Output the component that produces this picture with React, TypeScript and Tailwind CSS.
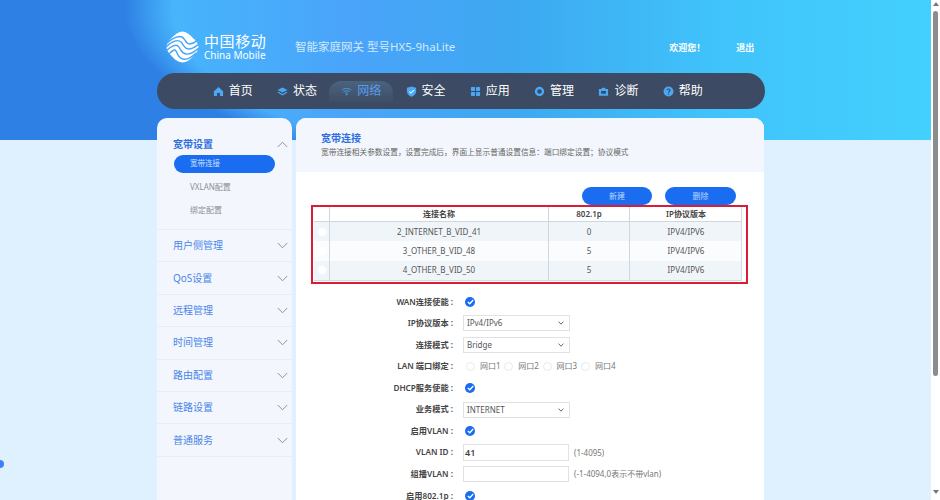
import React from "react";

const font = { fontFamily: '"Noto Sans", "Noto Sans CJK SC", sans-serif' };

const Logo = () => (
  <svg width="33" height="32" viewBox="0 0 33 32" className="shrink-0">
    <path
      d="M16.5 0.5 C20 0.5 23 3 26 6 C29 9 32.5 12.5 32.5 16 C32.5 19.5 29.5 23 26.5 26 C23.5 29 20 31.5 16.5 31.5 C13 31.5 9.5 29 6.5 26 C3.5 23 0.5 19.5 0.5 16 C0.5 12.5 3.5 9 6.5 6 C9.5 3 13 0.5 16.5 0.5 Z"
      fill="#fff"
    />
    <g fill="none" stroke="#49a6f8" strokeWidth="1.4">
      <path d="M1 12 C7 7 12 4 16 6 C20 8 19 13 24 13 C28 13 30 10 33 8" />
      <path d="M0 16 C6 10 12 8 15 11 C18 14 18 18 23 18 C27 18 30 15 33 13" />
      <path d="M0 20 C5 15 10 13 12 15 C15 18 15 22 20 23 C25 24 29 20 33 17" />
      <path d="M3 23 C7 19 9 18 10 20 C12 23 12 27 17 28 C21 29 25 27 30 22" />
    </g>
  </svg>
);

const cls = "w-[11px] h-[11px] shrink-0";
const navIcons: Record<string, React.ReactNode> = {
  home: (
    <svg viewBox="0 0 12 12" className={cls} fill="#4aa8f5">
      <path d="M6 1 L11 5.6 V11 H7.6 V7.6 H4.4 V11 H1 V5.6 Z" />
    </svg>
  ),
  layers: (
    <svg viewBox="0 0 12 12" className={cls} fill="#4aa8f5">
      <path d="M6 1.5 L11.5 4.4 L6 7.2 L0.5 4.4 Z" />
      <path d="M1.6 6.4 L6 8.6 L10.4 6.4 L11.5 7 L6 10.4 L0.5 7 Z" />
    </svg>
  ),
  wifi: (
    <svg viewBox="0 0 12 12" className={cls} fill="none" stroke="#4aa8f5" strokeWidth="0.9">
      <path d="M0.8 4.6 C3.6 2 8.4 2 11.2 4.6" />
      <path d="M2.6 6.4 C4.5 4.9 7.5 4.9 9.4 6.4" />
      <path d="M4.4 8 C5.4 7.4 6.6 7.4 7.6 8" />
      <circle cx="6" cy="9.4" r="0.5" fill="#4aa8f5" />
    </svg>
  ),
  shield: (
    <svg viewBox="0 0 12 12" className={cls}>
      <path d="M6 0.5 L11 2 V6 C11 9 8.6 10.8 6 11.8 C3.4 10.8 1 9 1 6 V2 Z" fill="#4aa8f5" />
      <path d="M3.6 6 L5.4 7.7 L8.6 4.4" fill="none" stroke="#fff" strokeWidth="1.1" />
    </svg>
  ),
  grid: (
    <svg viewBox="0 0 12 12" className={cls} fill="#4aa8f5">
      <rect x="1" y="1" width="4.5" height="4.5" rx="0.8" />
      <rect x="6.5" y="1" width="4.5" height="4.5" rx="0.8" />
      <rect x="1" y="6.5" width="4.5" height="4.5" rx="0.8" />
      <rect x="6.5" y="6.5" width="4.5" height="4.5" rx="0.8" />
    </svg>
  ),
  ring: (
    <svg viewBox="0 0 12 12" className={cls} fill="none" stroke="#4aa8f5" strokeWidth="2.6">
      <circle cx="6" cy="6" r="3.8" />
    </svg>
  ),
  kit: (
    <svg viewBox="0 0 12 12" className={cls}>
      <path d="M1 3.4 H3.6 L4.4 1.8 H7.6 L8.4 3.4 H11 V10.5 H1 Z" fill="#4aa8f5" />
      <rect x="3.4" y="5.4" width="5.2" height="3" fill="#3c4a63" />
    </svg>
  ),
  help: (
    <svg viewBox="0 0 12 12" className={cls}>
      <circle cx="6" cy="6" r="5.4" fill="#4aa8f5" />
      <path d="M4.3 4.7 C4.4 2.8 7.8 2.9 7.7 4.8 C7.6 6 6 6 6 7.3" fill="none" stroke="#3c4a63" strokeWidth="1.1" />
      <circle cx="6" cy="8.9" r="0.7" fill="#3c4a63" />
    </svg>
  ),
};

const navItems = [
  { icon: "home", label: "首页" },
  { icon: "layers", label: "状态" },
  { icon: "wifi", label: "网络", active: true },
  { icon: "shield", label: "安全" },
  { icon: "grid", label: "应用" },
  { icon: "ring", label: "管理" },
  { icon: "kit", label: "诊断" },
  { icon: "help", label: "帮助" },
];

const Chevron = ({ up }: { up?: boolean }) => (
  <svg width="11" height="7" viewBox="0 0 11 7" fill="none" stroke="#8d929b" strokeWidth="1">
    <path d={up ? "M0.8 6 L5.5 1.2 L10.2 6" : "M0.8 1 L5.5 5.8 L10.2 1"} />
  </svg>
);

const sideItems = ["用户侧管理", "QoS设置", "远程管理", "时间管理", "路由配置", "链路设置", "普通服务"];

const Check = () => (
  <span className="flex h-[10px] w-[10px] items-center justify-center rounded-full bg-[#1a6cf0]">
    <svg width="7" height="6" viewBox="0 0 7 6" fill="none" stroke="#fff" strokeWidth="1.3">
      <path d="M0.8 3 L2.8 4.8 L6.2 1" />
    </svg>
  </span>
);

const Select = ({ value }: { value: string }) => (
  <div className="flex h-[16px] w-[107px] items-center justify-between border border-[#dfe3e8] bg-white pl-[3px] pr-[5px] text-[8px] text-[#555]">
    <span>{value}</span>
    <svg width="6" height="4" viewBox="0 0 6 4" fill="none" stroke="#555" strokeWidth="0.9">
      <path d="M0.5 0.6 L3 3.2 L5.5 0.6" />
    </svg>
  </div>
);

const Row = ({ label, children }: { label: string; children: React.ReactNode }) => (
  <div className="flex h-[21.55px] items-center">
    <div className="w-[157px] shrink-0 text-right text-[8.2px] font-semibold text-[#444]">{label} :</div>
    <div className="ml-[10px] flex items-center">{children}</div>
  </div>
);

const rows = [
  { name: "2_INTERNET_B_VID_41", p: "0", bg: "bg-[#f0f5fa]", h: "h-[19px]" },
  { name: "3_OTHER_B_VID_48", p: "5", bg: "bg-[#fbfcfe]", h: "h-[19.5px]" },
  { name: "4_OTHER_B_VID_50", p: "5", bg: "bg-[#f0f5fa]", h: "h-[19.5px]" },
];

export default function App() {
  return (
    <div className="flex h-[500px] w-[940px] overflow-hidden bg-white" style={font}>
      <div className="relative h-[500px] w-[931px] shrink-0 overflow-hidden bg-[#dff0ff]">
        {/* header backdrop */}
        <div className="absolute left-0 top-0 h-[140px] w-full bg-[radial-gradient(ellipse_800px_220px_at_925px_10px,transparent_94%,#2f80e4_100%),linear-gradient(90deg,#46b8fc_14%,#4aa4fa_38%,#3da8f0_55%,#40c4fb_78%,#43d0fd_100%)]" />
        <span className="absolute -left-[4px] top-[460px] h-[8px] w-[8px] rounded-full bg-[#3b82f6]" />

        <div className="relative ml-[157px] w-[608px]">
          {/* top bar */}
          <div className="flex h-[73px] pl-[9px] pt-[31px]">
            <Logo />
            <div className="ml-[5px] mt-[3px] w-[64px] text-white">
              <div className="text-[15px] leading-[15px] tracking-[0.6px] whitespace-nowrap">中国移动</div>
              <div className="mt-[1px] text-[10px] leading-[11px] whitespace-nowrap">China Mobile</div>
            </div>
            <div className="ml-[27px] mt-[8px] text-[11.5px] leading-[16px] whitespace-nowrap text-[#d3e9fd]">智能家庭网关 型号HX5-9haLite</div>
            <div className="ml-[214px] mt-[11px] text-[9px] font-bold leading-[12px] whitespace-nowrap text-white">欢迎您！</div>
            <div className="ml-[31px] mt-[11px] text-[9px] font-bold leading-[12px] whitespace-nowrap text-white">退出</div>
          </div>

          {/* nav */}
          <div className="flex h-[36px] items-center rounded-[18px] bg-[#3c4a63] pl-[43.5px]">
            {navItems.map((item) => (
              <div key={item.label} className="flex h-full w-[64.3px] shrink-0 items-center justify-center">
                <div className={`flex h-[21px] w-[64px] items-center justify-center gap-[5px] rounded-t-[12px] ${item.active ? "bg-gradient-to-b from-[#4a637d] to-[#3e4e67]" : ""}`}>
                  {navIcons[item.icon]}
                  <span className={`text-[12px] leading-[16px] ${item.active ? "text-[#5a9bee]" : "text-white"}`}>{item.label}</span>
                </div>
              </div>
            ))}
          </div>

          {/* panels */}
          <div className="mt-[9px] flex gap-[4px]">
            <div className="h-[382px] w-[135px] shrink-0 rounded-t-[10px] bg-[#f3f7fd]">
              <div className="h-[112px] border-b border-[#e9eef4] pt-[18px]">
                <div className="flex items-center justify-between pl-[16px] pr-[4px]">
                  <span className="text-[10px] font-bold leading-[16px] text-[#2f6fe0]">宽带设置</span>
                  <Chevron up />
                </div>
                <div className="ml-[17px] mt-[3px] flex h-[18px] w-[101px] items-center rounded-full bg-[#1a6cf0] pl-[16px] text-[7.5px] text-[#cfe0ff]">宽带连接</div>
                <div className="ml-[33px] mt-[8px] text-[8px] leading-[12px] text-[#8a8f96]">VXLAN配置</div>
                <div className="ml-[33px] mt-[11px] text-[8px] leading-[12px] text-[#8a8f96]">绑定配置</div>
              </div>
              {sideItems.map((name) => (
                <div key={name} className="flex h-[32.4px] items-center justify-between border-b border-[#e9eef4] pl-[16px] pr-[4px]">
                  <span className="text-[10px] text-[#4a86e8]">{name}</span>
                  <Chevron />
                </div>
              ))}
            </div>

            <div className="h-[382px] w-[468px] shrink-0 overflow-hidden rounded-t-[10px] bg-white">
              <div className="h-[54px] bg-[#f3f7fd] pl-[25px] pt-[13px]">
                <div className="text-[10px] font-bold leading-[15px] text-[#2f6fe0]">宽带连接</div>
                <div className="text-[7.7px] leading-[13px] text-[#666]">宽带连接相关参数设置，设置完成后，界面上显示普通设置信息：端口绑定设置；协议模式</div>
              </div>

              <div className="flex gap-[13px] pl-[286px] pt-[15px]">
                <button className="h-[18px] w-[70px] rounded-full bg-[#1a6cf0] text-[8px] text-[#bcd6ff]">新建</button>
                <button className="h-[18px] w-[71px] rounded-full bg-[#1a6cf0] text-[8px] text-[#bcd6ff]">删除</button>
              </div>

              {/* table with red outline */}
              <div className="ml-[15px] w-[437px] border-2 border-[#d81e36] px-[1px] pb-[1px]">
                <div className="w-[428px] border-b border-r border-[#d5dbe3] text-[8px] text-[#555]">
                  <div className="grid h-[15px] grid-cols-[16px_219px_81px_112px] items-center border-b border-[#cfd6df] bg-white text-center font-semibold text-[#444]">
                    <span className="h-full border-r border-[#cfd6df]" />
                    <span className="flex h-full items-center justify-center border-r border-[#cfd6df]">连接名称</span>
                    <span className="flex h-full items-center justify-center border-r border-[#cfd6df]">802.1p</span>
                    <span>IP协议版本</span>
                  </div>
                  {rows.map((r) => (
                    <div key={r.name} className={`grid ${r.h} grid-cols-[16px_219px_81px_112px] items-center text-center ${r.bg}`}>
                      <span className="flex h-full items-center justify-center border-r border-[#cfd6df]">
                        <span className="h-[8px] w-[8px] rounded-full bg-white" />
                      </span>
                      <span className="flex h-full items-center justify-center border-r border-[#cfd6df]">{r.name}</span>
                      <span className="flex h-full items-center justify-center border-r border-[#cfd6df]">{r.p}</span>
                      <span>IPV4/IPV6</span>
                    </div>
                  ))}
                </div>
              </div>

              {/* form */}
              <div className="pt-[7px]">
                <Row label="WAN连接使能"><span className="ml-[2px]"><Check /></span></Row>
                <Row label="IP协议版本"><Select value="IPv4/IPv6" /></Row>
                <Row label="连接模式"><Select value="Bridge" /></Row>
                <Row label="LAN 端口绑定">
                  <div className="flex">
                    {["网口1", "网口2", "网口3", "网口4"].map((p) => (
                      <div key={p} className="flex w-[38.3px] items-center pl-[3px]">
                        <span className="h-[9px] w-[9px] rounded-full border border-[#e6e9ee] bg-white" />
                        <span className="ml-[5px] text-[8px] text-[#777]">{p}</span>
                      </div>
                    ))}
                  </div>
                </Row>
                <Row label="DHCP服务使能"><span className="ml-[2px]"><Check /></span></Row>
                <Row label="业务模式"><Select value="INTERNET" /></Row>
                <Row label="启用VLAN"><span className="ml-[2px]"><Check /></span></Row>
                <Row label="VLAN ID">
                  <div className="flex h-[17px] w-[106px] items-center border border-[#dfe3e8] pl-[1px] text-[9px] font-semibold text-[#444]">41</div>
                  <span className="ml-[5px] text-[8px] text-[#777]">(1-4095)</span>
                </Row>
                <Row label="组播VLAN">
                  <div className="h-[16px] w-[106px] border border-[#dfe3e8]" />
                  <span className="ml-[5px] whitespace-nowrap text-[8px] text-[#777]">(-1-4094,0表示不带vlan)</span>
                </Row>
                <Row label="启用802.1p"><span className="ml-[2px]"><Check /></span></Row>
              </div>
            </div>
          </div>
        </div>
      </div>

      {/* scrollbar */}
      <div className="flex h-[500px] w-[9px] flex-col items-center bg-white">
        <span className="mt-[2px] h-0 w-0 border-x-[3px] border-b-[4px] border-x-transparent border-b-[#777]" />
        <span className="mt-[5px] h-[365px] w-[5px] rounded-full bg-[#8c8c8c]" />
        <span className="mt-[114px] h-0 w-0 border-x-[3px] border-t-[4px] border-x-transparent border-t-[#777]" />
      </div>
    </div>
  );
}
